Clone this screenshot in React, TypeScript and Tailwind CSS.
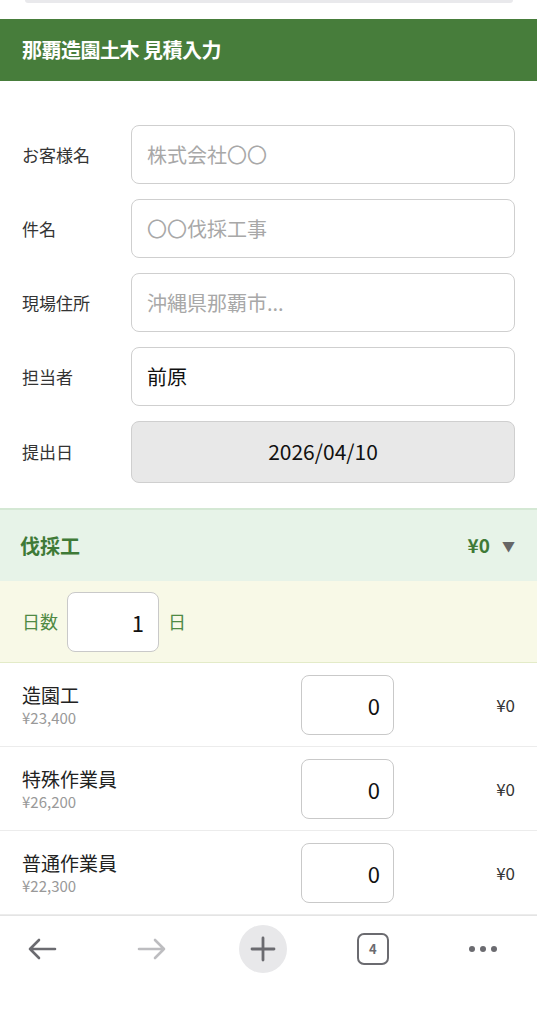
import { useState } from "react";

const font = { fontFamily: '"Noto Sans CJK JP", "Noto Sans", sans-serif' };

const fields = [
  { label: "お客様名", placeholder: "株式会社〇〇", value: "" },
  { label: "件名", placeholder: "〇〇伐採工事", value: "" },
  { label: "現場住所", placeholder: "沖縄県那覇市...", value: "" },
  { label: "担当者", placeholder: "", value: "前原" },
];

const workers = [
  { name: "造園工", price: "¥23,400" },
  { name: "特殊作業員", price: "¥26,200" },
  { name: "普通作業員", price: "¥22,300" },
];

export default function App() {
  const [days, setDays] = useState("1");

  return (
    <div className="h-[1024px] bg-white flex flex-col overflow-hidden" style={font}>
      {/* browser address bar remnant */}
      <div className="h-[19px] flex justify-center">
        <div className="w-[488px] h-[3px] bg-[#e9e9ec] rounded-b-full" />
      </div>

      {/* Header */}
      <div className="h-[62px] bg-[#477d3b] flex items-center px-[22px]">
        <h1 className="text-white text-[20px] font-bold tracking-tight">那覇造園土木 見積入力</h1>
      </div>

      {/* Form */}
      <div className="flex-1 overflow-hidden flex flex-col">
        <div className="pt-[44px] pb-[25px] px-[22px] flex flex-col gap-[15px]">
          {fields.map((f) => (
            <div key={f.label} className="flex items-center">
              <label className="w-[109px] text-[17px] text-[#333]">{f.label}</label>
              <input
                defaultValue={f.value}
                placeholder={f.placeholder}
                className="flex-1 h-[59px] border border-[#cfcfcf] rounded-[8px] px-[15px] text-[20px] text-[#111] placeholder:text-[#a8a8a8] outline-none"
              />
            </div>
          ))}
          <div className="flex items-center">
            <label className="w-[109px] text-[17px] text-[#333]">提出日</label>
            <div className="flex-1 h-[62px] border border-[#cfcfcf] rounded-[8px] bg-[#e8e8e8] flex items-center justify-center text-[21px] text-[#111]">
              2026/04/10
            </div>
          </div>
        </div>

        {/* Section header */}
        <div className="h-[73px] bg-[#e7f3e8] border-t-2 border-[#d4e8d4] flex items-center justify-between pl-[20px] pr-[22px]">
          <span className="text-[20px] font-bold text-[#3f7a37]">伐採工</span>
          <span className="flex items-center gap-[12px] text-[19px] font-bold text-[#3f7a37]">
            ¥0
            <span className="text-[13px] text-[#666]">▼</span>
          </span>
        </div>

        {/* Days */}
        <div className="h-[82px] bg-[#f8f9e7] border-b border-[#e3ebc8] flex items-center px-[22px] gap-[9px]">
          <span className="text-[18px] text-[#4f8a44]">日数</span>
          <input
            value={days}
            onChange={(e) => setDays(e.target.value)}
            className="w-[92px] h-[60px] bg-white border border-[#c9c9c9] rounded-[8px] text-right pr-[14px] text-[22px] text-[#111] outline-none"
          />
          <span className="text-[18px] text-[#4f8a44]">日</span>
        </div>

        {/* Workers */}
        {workers.map((w) => (
          <div key={w.name} className="h-[84px] border-b border-[#ececec] flex items-center px-[22px]">
            <div className="flex-1">
              <div className="text-[19px] text-[#222] leading-[25px]">{w.name}</div>
              <div className="text-[15px] text-[#999] leading-[21px]">{w.price}</div>
            </div>
            <input
              defaultValue="0"
              className="w-[93px] h-[60px] border border-[#c9c9c9] rounded-[8px] text-right pr-[13px] text-[22px] text-[#111] outline-none"
            />
            <div className="w-[121px] text-right text-[17px] text-[#333]">¥0</div>
          </div>
        ))}
      </div>

      {/* Browser toolbar */}
      <div className="h-[109px] border-t border-[#e4e4e4] bg-white pt-[9px]">
        <div className="flex items-center justify-between h-[48px] pl-[18px] pr-[30px]">
          <div className="w-[48px] flex justify-center">
            <svg width="32" height="24" viewBox="0 0 32 24" fill="none" stroke="#6b6b70" strokeWidth="2.6" strokeLinecap="round" strokeLinejoin="round">
              <path d="M29 12H4M13 3l-9 9 9 9" />
            </svg>
          </div>
          <div className="w-[48px] flex justify-center">
            <svg width="32" height="24" viewBox="0 0 32 24" fill="none" stroke="#bdbdc0" strokeWidth="2.6" strokeLinecap="round" strokeLinejoin="round">
              <path d="M3 12h25M19 3l9 9-9 9" />
            </svg>
          </div>
          <div className="w-[48px] h-[48px] rounded-full bg-[#e8e8ea] flex items-center justify-center">
            <svg width="26" height="26" viewBox="0 0 26 26" fill="none" stroke="#6b6b70" strokeWidth="2.8" strokeLinecap="round">
              <path d="M13 2v22M2 13h22" />
            </svg>
          </div>
          <div className="w-[48px] flex justify-center">
            <div className="w-[32px] h-[32px] border-[2.5px] border-[#6b6b70] rounded-[7px] flex items-center justify-center text-[13px] font-bold text-[#6b6b70]">
              4
            </div>
          </div>
          <div className="w-[48px] flex justify-center gap-[5px]">
            <span className="w-[6px] h-[6px] rounded-full bg-[#6b6b70]" />
            <span className="w-[6px] h-[6px] rounded-full bg-[#6b6b70]" />
            <span className="w-[6px] h-[6px] rounded-full bg-[#6b6b70]" />
          </div>
        </div>
      </div>
    </div>
  );
}
